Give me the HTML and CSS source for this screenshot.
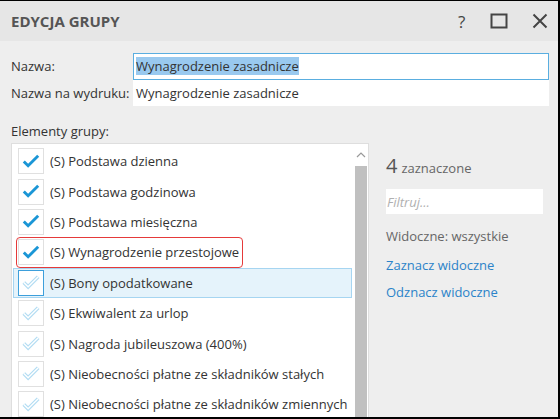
FILE: index.html
```html
<!DOCTYPE html>
<html lang="pl">
<head>
<meta charset="utf-8">
<link rel="stylesheet" href="styles.css">
</head>
<body>
<div class="window">
  <div class="titlebar">
    <span class="title">EDYCJA GRUPY</span>
    <div class="controls">
      <span class="help">?</span>
      <svg class="ctl" width="18" height="16" viewBox="0 0 18 16"><rect x="1.5" y="1.5" width="15" height="13" fill="none" stroke="#444" stroke-width="2"/></svg>
      <svg class="ctl" width="16" height="16" viewBox="0 0 16 16"><path d="M1.5 1.5 L14.5 14.5 M14.5 1.5 L1.5 14.5" stroke="#444" stroke-width="2"/></svg>
    </div>
  </div>
  <div class="content">
    <div class="form">
      <label class="lbl">Nazwa:</label>
      <div class="input focused"><span class="sel">Wynagrodzenie zasadnicze</span></div>
      <label class="lbl">Nazwa na wydruku:</label>
      <div class="input">Wynagrodzenie zasadnicze</div>
    </div>
    <div class="section">Elementy grupy:</div>
    <div class="main">
      <div class="listbox">
        <div class="rows">
          <div class="row"><span class="cb"><svg width="25" height="25" viewBox="0 0 25 25"><path d="M5 12.5 L9.5 17 L20 6.5" fill="none" stroke="#1a96d6" stroke-width="3"/></svg></span><span>(S) Podstawa dzienna</span></div>
          <div class="row"><span class="cb"><svg width="25" height="25" viewBox="0 0 25 25"><path d="M5 12.5 L9.5 17 L20 6.5" fill="none" stroke="#1a96d6" stroke-width="3"/></svg></span><span>(S) Podstawa godzinowa</span></div>
          <div class="row"><span class="cb"><svg width="25" height="25" viewBox="0 0 25 25"><path d="M5 12.5 L9.5 17 L20 6.5" fill="none" stroke="#1a96d6" stroke-width="3"/></svg></span><span>(S) Podstawa miesięczna</span></div>
          <div class="row marked"><span class="cb"><svg width="25" height="25" viewBox="0 0 25 25"><path d="M5 12.5 L9.5 17 L20 6.5" fill="none" stroke="#1a96d6" stroke-width="3"/></svg></span><span>(S) Wynagrodzenie przestojowe</span></div>
          <div class="row current"><span class="cb"><svg width="25" height="25" viewBox="0 0 25 25"><path d="M5 12.5 L9.5 17 L20 6.5" fill="none" stroke="#b3ddf3" stroke-width="4"/><path d="M5 12.5 L9.5 17 L20 6.5" fill="none" stroke="#fff" stroke-width="1.4"/></svg></span><span>(S) Bony opodatkowane</span></div>
          <div class="row"><span class="cb"><svg width="25" height="25" viewBox="0 0 25 25"><path d="M5 12.5 L9.5 17 L20 6.5" fill="none" stroke="#b3ddf3" stroke-width="4"/><path d="M5 12.5 L9.5 17 L20 6.5" fill="none" stroke="#fff" stroke-width="1.4"/></svg></span><span>(S) Ekwiwalent za urlop</span></div>
          <div class="row"><span class="cb"><svg width="25" height="25" viewBox="0 0 25 25"><path d="M5 12.5 L9.5 17 L20 6.5" fill="none" stroke="#b3ddf3" stroke-width="4"/><path d="M5 12.5 L9.5 17 L20 6.5" fill="none" stroke="#fff" stroke-width="1.4"/></svg></span><span>(S) Nagroda jubileuszowa (400%)</span></div>
          <div class="row"><span class="cb"><svg width="25" height="25" viewBox="0 0 25 25"><path d="M5 12.5 L9.5 17 L20 6.5" fill="none" stroke="#b3ddf3" stroke-width="4"/><path d="M5 12.5 L9.5 17 L20 6.5" fill="none" stroke="#fff" stroke-width="1.4"/></svg></span><span>(S) Nieobecności płatne ze składników stałych</span></div>
          <div class="row"><span class="cb"><svg width="25" height="25" viewBox="0 0 25 25"><path d="M5 12.5 L9.5 17 L20 6.5" fill="none" stroke="#b3ddf3" stroke-width="4"/><path d="M5 12.5 L9.5 17 L20 6.5" fill="none" stroke="#fff" stroke-width="1.4"/></svg></span><span>(S) Nieobecności płatne ze składników zmiennych</span></div>
        </div>
        <div class="scrollbar">
          <svg class="arrow" width="10" height="6" viewBox="0 0 10 6"><path d="M1 5 L5 1 L9 5" fill="none" stroke="#9a9a9a" stroke-width="1.2"/></svg>
          <div class="thumb"></div>
        </div>
      </div>
      <div class="side">
        <div class="count"><span class="num">4</span> zaznaczone</div>
        <div class="filter">Filtruj...</div>
        <div class="visible">Widoczne: wszystkie</div>
        <a class="link">Zaznacz widoczne</a>
        <a class="link">Odznacz widoczne</a>
      </div>
    </div>
  </div>
</div>
</body>
</html>
```
FILE: styles.css
```css
* { box-sizing: border-box; }
html, body { margin: 0; padding: 0; }
body {
  width: 560px;
  height: 419px;
  overflow: hidden;
  font-family: "Open Sans", "Noto Sans", sans-serif;
  font-size: 13px;
  color: #333;
}
.window {
  width: 560px;
  height: 419px;
  border-top: 1px solid #000;
  border-right: 2px solid #000;
  border-bottom: 2px solid #000;
  background: #eeeeee;
  display: flex;
  flex-direction: column;
  overflow: hidden;
}
.titlebar {
  height: 40px;
  flex: none;
  background: #e6e6e6;
  display: flex;
  align-items: center;
  justify-content: space-between;
  padding: 0 10px 0 11px;
}
.title {
  font-weight: 700;
  font-size: 15px;
  color: #555;
}
.controls {
  display: flex;
  align-items: center;
}
.help {
  font-size: 17px;
  color: #444;
  width: 12px;
  margin-right: 20px;
  line-height: 1;
}
.ctl { display: block; }
.ctl + .ctl { margin-left: 24px; }
.content {
  flex: 1;
  min-height: 0;
  display: flex;
  flex-direction: column;
  padding: 12px 9px 0 11px;
}
.form {
  display: grid;
  grid-template-columns: 122px 1fr;
  grid-auto-rows: 26px;
  row-gap: 1px;
  align-items: center;
}
.lbl { color: #333; }
.input {
  height: 26px;
  background: #fff;
  border: 1px solid transparent;
  padding: 0 2px;
  display: flex;
  align-items: center;
  color: #333;
  white-space: nowrap;
}
.input.focused {
  height: 27px;
  border-color: #5aaee0;
}
.sel { background: #99c9ef; }
.section {
  margin-top: 15px;
  height: 20px;
  line-height: 20px;
}
.main {
  margin-top: 2px;
  flex: 1;
  min-height: 0;
  display: flex;
}
.listbox {
  width: 358px;
  flex: none;
  background: #fff;
  border: 1px solid #dedede;
  border-bottom: none;
  display: flex;
  overflow: hidden;
}
.rows {
  flex: 1;
  padding: 2px 0 0 1px;
}
.row {
  position: relative;
  height: 30.4px;
  display: flex;
  align-items: center;
  padding-left: 4px;
  gap: 6px;
  white-space: nowrap;
  border: 1px solid transparent;
  margin-right: 1px;
}
.row.current {
  background: #e5f3fb;
  border-color: #a6d5f1;
}
.cb {
  width: 26px;
  height: 26px;
  flex: none;
  border: 1px solid #e0e0e0;
  background: #fff;
  display: flex;
  align-items: center;
  justify-content: center;
}
.cb svg { display: block; }
.row.current .cb { border-color: #3d9fdb; }
.row.marked::before {
  content: "";
  position: absolute;
  left: 2px;
  top: -1px;
  width: 225px;
  height: 29px;
  border: 1.5px solid #e53a3a;
  border-radius: 4px;
}
.scrollbar {
  width: 15px;
  flex: none;
  display: flex;
  flex-direction: column;
  align-items: center;
  padding-top: 8px;
}
.arrow { display: block; }
.thumb {
  margin-top: 8px;
  width: 12px;
  flex: 1;
  background: #c0c0c0;
}
.side {
  flex: 1;
  padding: 9px 6px 0 17px;
  display: flex;
  flex-direction: column;
  color: #666;
}
.count {
  font-size: 13px;
  color: #666;
  height: 26px;
  display: flex;
  align-items: baseline;
  gap: 4px;
}
.num { font-size: 20px; color: #555; }
.filter {
  margin-top: 11px;
  height: 25px;
  background: #fff;
  font-style: italic;
  color: #b0b0b0;
  padding-left: 1px;
  display: flex;
  align-items: center;
}
.visible {
  margin-top: 12px;
  height: 20px;
  line-height: 20px;
}
.link {
  color: #2b83c9;
  margin-top: 9px;
  height: 20px;
  line-height: 20px;
}
.link + .link { margin-top: 7px; }
```
